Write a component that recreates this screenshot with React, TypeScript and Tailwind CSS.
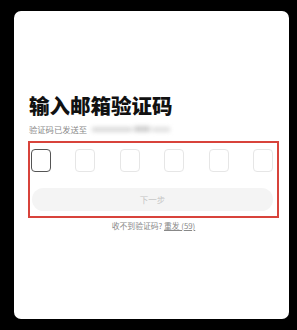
export default function App() {
  const cells = [0, 1, 2, 3, 4, 5];

  return (
    <div className="h-[330px] w-[297px] bg-black pl-[14px] pt-[11px] font-['Noto_Sans_CJK_SC',sans-serif]">
      <div className="h-[308px] w-[275px] rounded-[7px] bg-white pl-[14px] pt-[82px]">
        <h1 className="pl-[1px] text-[20.5px] font-black leading-[24px] text-[#111]">输入邮箱验证码</h1>
        <div className="mt-[6px] flex h-[12px] items-center pl-[1px] text-[8.3px] leading-[12px] text-[#888]">
          <span>验证码已发送至</span>
          <span className="ml-[5px] flex items-center gap-[2px] blur-[2px]">
            <span className="h-[5px] w-[40px] bg-[#dadada]" />
            <span className="h-[6px] w-[16px] bg-[#cfcfcf]" />
            <span className="h-[5px] w-[18px] bg-[#e0e0e0]" />
          </span>
        </div>

        <div className="mt-[6px] w-[251px] border-2 border-[#d8433b] pb-[5px] pl-[1px] pr-[4px] pt-[6px]">
          <div className="flex justify-between">
            {cells.map((i) => (
              <div
                key={i}
                className={
                  i === 0
                    ? 'h-[23px] w-[20px] rounded-[4px] border border-[#555]'
                    : 'h-[23px] w-[20px] rounded-[4px] border border-[#e6e6e6]'
                }
              />
            ))}
          </div>
          <button
            type="button"
            className="ml-[1px] mt-[16px] flex h-[23px] w-[241px] items-center justify-center rounded-full bg-[#f4f4f4] text-[8.5px] text-[#c4c4c4]"
          >
            下一步
          </button>
        </div>

        <div className="mt-[2px] w-[251px] text-center text-[7.8px] leading-[12px] text-[#888]">
          收不到验证码? <span className="underline">重发 (59)</span>
        </div>
      </div>
    </div>
  );
}
